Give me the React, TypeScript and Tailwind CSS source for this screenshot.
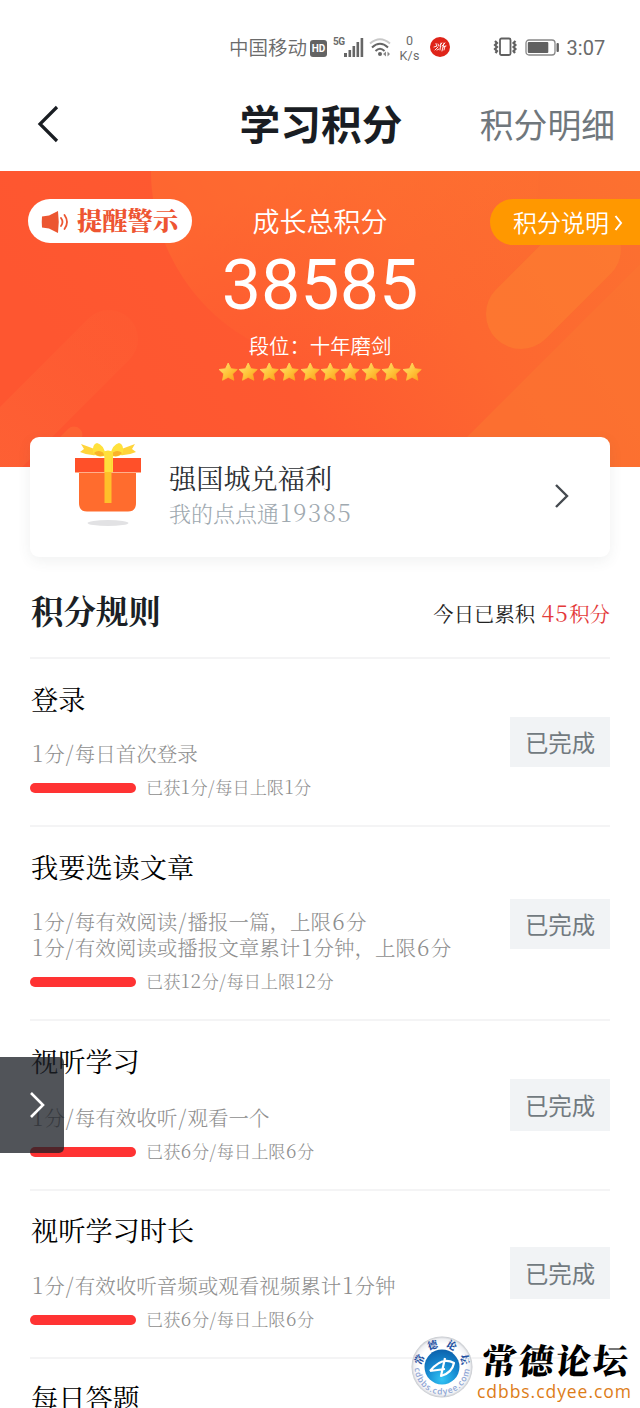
import clsx from "clsx";

const sans = "font-['Roboto','Noto_Sans_CJK_SC',sans-serif]";
const serif = "font-['Noto_Serif_CJK_SC','DejaVu_Serif','Noto_Sans_CJK_SC',serif]";

type Rule = {
  title: string;
  lines: string[];
  progress: string;
  rowClass: string;
  descClass: string;
  buttonClass: string;
};

const rules: Rule[] = [
  {
    title: "登录",
    lines: ["1分/每日首次登录"],
    progress: "已获1分/每日上限1分",
    rowClass: "h-[168px] pt-5",
    descClass: "mt-[21px] mb-3",
    buttonClass: "mt-[38px] h-[50px]",
  },
  {
    title: "我要选读文章",
    lines: ["1分/每有效阅读/播报一篇，上限6分", "1分/有效阅读或播报文章累计1分钟，上限6分"],
    progress: "已获12分/每日上限12分",
    rowClass: "h-[194px] pt-5",
    descClass: "mt-[21px] mb-3",
    buttonClass: "mt-[52px] h-[50px]",
  },
  {
    title: "视听学习",
    lines: ["1分/每有效收听/观看一个"],
    progress: "已获6分/每日上限6分",
    rowClass: "h-[170px] pt-5",
    descClass: "mt-[23px] mb-3",
    buttonClass: "mt-[38px] h-[52px]",
  },
  {
    title: "视听学习时长",
    lines: ["1分/有效收听音频或观看视频累计1分钟"],
    progress: "已获6分/每日上限6分",
    rowClass: "h-[168px] pt-[19px]",
    descClass: "mt-[22px] mb-3",
    buttonClass: "mt-[37px] h-[52px]",
  },
  {
    title: "每日答题",
    lines: [],
    progress: "",
    rowClass: "h-[168px] pt-[19px]",
    descClass: "mt-[22px]",
    buttonClass: "",
  },
];

// Digits and slashes are set a little larger and looser than the CJK text around them
function Mixed({ text, wide = false }: { text: string; wide?: boolean }) {
  return text.split(/([\d/]+)/).map((part, i) =>
    i % 2 === 1 ? (
      <span
        key={i}
        className={clsx("text-[1.1em] leading-none", wide ? "ml-[0.05em] tracking-[0.06em]" : "ml-[0.02em] tracking-[0.04em]")}
      >
        {part}
      </span>
    ) : (
      part
    ),
  );
}

function StatusBar() {
  return (
    <div className={clsx(sans, "flex h-[94px] items-center pl-[229px] text-[#6b6b6b]")}>
      <span className="pt-1 text-[19.5px] leading-none font-[350] whitespace-nowrap">中国移动</span>
      <span className="mt-0.5 ml-[3px] flex h-[17px] w-[17px] items-center justify-center rounded-[3px] bg-[#636363] text-[10px] font-bold text-white">
        HD
      </span>
      <span className="mb-2.5 ml-[6px] text-[10px] leading-none font-bold tracking-[-0.5px]">5G</span>
      <svg width="20" height="19" viewBox="0 0 20 19" className="-ml-px" fill="#666">
        <rect x="0" y="15" width="3" height="4" />
        <rect x="4.5" y="12" width="2.6" height="7" />
        <rect x="8.5" y="8" width="2.6" height="11" />
        <rect x="12.5" y="4" width="2.6" height="15" />
        <rect x="16.6" y="0" width="2.6" height="19" />
      </svg>
      <svg width="22" height="20" viewBox="0 0 22 20" className="ml-[5px]" fill="none" strokeWidth="2">
        <path d="M1 6.500Q11 -2 21 6.500" stroke="#c8c8c8" />
        <path d="M3 10.500Q11 3 19 10.500" stroke="#666" />
        <path d="M6.500 14Q11 9.600 15.500 14" stroke="#666" />
        <circle cx="11" cy="17" r="2" fill="#666" />
        <path d="M17 14.500v5l-3-2.500zM18.500 14.500v5l2.500-2.500z" fill="#888" />
      </svg>
      <div className="ml-[9px] flex w-5 flex-col items-center pt-0.5 text-[12.5px] leading-[15px]">
        <span>0</span>
        <span className="tracking-[0.3px]">K/s</span>
      </div>
      <svg width="20" height="20" viewBox="0 0 20 20" className="ml-[10px]">
        <circle cx="10" cy="10" r="10" fill="#df2419" />
        <path
          d="M4 10l3-1M6 6.5l.5 2M5 13l3-3M8 7l1 2M7 13l2-1M10 8l2-2M11 6l-1 7M12 9l3-3M14 6l-2 8M13 10l3-1M15 9l-1 4"
          stroke="#fff"
          strokeWidth="0.900"
          strokeLinecap="round"
        />
      </svg>
      <svg width="24" height="20" viewBox="0 0 24 20" className="ml-[43px]" fill="none" stroke="#606060" strokeWidth="1.800">
        <rect x="7" y="1.500" width="10.500" height="16.500" rx="1.500" />
        <path d="M2 4l2 2-2 2 2 2-2 2 2 2-1.500 2M22.500 4l-2 2 2 2-2 2 2 2-2 2 1.500 2" strokeWidth="2.200" />
      </svg>
      <svg width="35" height="17" viewBox="0 0 35 17" className="ml-2" fill="none">
        <rect x="1" y="1" width="29" height="15" rx="3" stroke="#888" strokeWidth="1.300" />
        <rect x="2.800" y="3" width="20.500" height="11" rx="1" fill="#606060" />
        <rect x="31.500" y="4" width="2.400" height="9" rx="1" fill="#606060" />
      </svg>
      <span className="ml-[7px] pt-0.5 text-[20px] leading-none">3:07</span>
    </div>
  );
}

function Header() {
  return (
    <header className={clsx(sans, "grid h-[77px] grid-cols-[200px_240px_200px] items-center pb-4")}>
      <svg width="24" height="38" viewBox="0 0 24 38" className="mb-[2px] ml-[35px]" fill="none" stroke="#191d22" strokeWidth="3.200">
        <path d="M22 2 5 19 22 36" />
      </svg>
      <h1 className="pt-1 pl-0.5 text-center text-[40.7px] leading-none font-bold text-[#191d23]">学习积分</h1>
      <span className="mr-[25px] pt-1 text-right text-[33.8px] leading-none whitespace-nowrap text-[#70777c]">
        积分明细
      </span>
    </header>
  );
}

function BannerArt() {
  return (
    <svg className="absolute inset-0" width="640" height="296" viewBox="0 0 640 296">
      <defs>
        <linearGradient id="base" x1="0" y1="0.3" x2="1" y2="0">
          <stop offset="0" stopColor="#fe5630" />
          <stop offset="0.3" stopColor="#fe5930" />
          <stop offset="0.6" stopColor="#fd6730" />
          <stop offset="1" stopColor="#fc7130" />
        </linearGradient>
        <linearGradient id="disc" x1="0.4" y1="0.5" x2="0.6" y2="1">
          <stop offset="0" stopColor="#ff7430" stopOpacity="0.5" />
          <stop offset="1" stopColor="#ff6c30" stopOpacity="0" />
        </linearGradient>
        <linearGradient id="left" gradientUnits="userSpaceOnUse" x1="120" y1="150" x2="0" y2="290">
          <stop offset="0" stopColor="#fd6636" stopOpacity="0.2" />
          <stop offset="1" stopColor="#fd6636" stopOpacity="0.6" />
        </linearGradient>
      </defs>
      <rect width="640" height="296" fill="url(#base)" />
      <circle cx="345" cy="0" r="194" fill="url(#disc)" />
      <path d="M109 168-40 317" stroke="url(#left)" strokeWidth="58" strokeLinecap="round" />
      <path d="M74 264 30 308" stroke="#fd7036" strokeOpacity="0.5" strokeWidth="17" strokeLinecap="round" />
      <path d="M521 143 586 78" stroke="#fc7c31" strokeOpacity="0.7" strokeWidth="70" strokeLinecap="round" />
      <path d="M437 296 640 93V296Z" fill="#fb7331" fillOpacity="0.7" />
    </svg>
  );
}

function Star() {
  return (
    <svg width="20.4" height="20" viewBox="0 0 24 24">
      <path
        d="M12 1.200l3.300 6.900 7.600.9-5.600 5.300 1.500 7.600L12 18.300l-6.800 3.600 1.500-7.600L1.100 9l7.600-.9z"
        fill="url(#gold)"
        strokeLinejoin="round"
        stroke="url(#gold)"
      />
    </svg>
  );
}

function Banner() {
  return (
    <section className={clsx(sans, "relative h-[296px] text-white")}>
      <BannerArt />
      <div className="relative grid grid-cols-[210px_220px_210px] items-start pt-7">
        <div className="ml-7 flex h-11 w-[164px] items-center rounded-full bg-white pl-[13px] text-[#ee5532]">
          <svg width="29" height="24" viewBox="0 0 29 24" className="mt-0.5" fill="none">
            <path d="M1 6.500Q0.500 12 1 17.500L8 18.500 17 23Q18.500 12 17 1L8 5.500Z" fill="#ec5631" />
            <path d="M20 8q3 4 0 8M23.500 5q5 7 0 14" stroke="#ec5631" strokeWidth="1.800" strokeLinecap="round" />
          </svg>
          <span className="mb-0.5 ml-[7px] font-['Noto_Serif_CJK_SC','Noto_Sans_CJK_SC',serif] text-[25.3px] leading-none font-black whitespace-nowrap">
            提醒警示
          </span>
        </div>
        <div className="flex flex-col items-center whitespace-nowrap">
          <span className="mt-1.5 text-[27px] leading-9 font-[350]">成长总积分</span>
          <span className="mt-[7px] text-[70px] leading-[74px]">38585</span>
          <span className="mt-[11px] text-[20.4px] leading-7 font-[350]">段位：十年磨剑</span>
          <svg width="0" height="0" className="absolute">
            <linearGradient id="gold" x1="0" y1="0" x2="1" y2="1">
              <stop offset="0" stopColor="#ffe277" />
              <stop offset="0.5" stopColor="#ffc63c" />
              <stop offset="1" stopColor="#fb9c16" />
            </linearGradient>
          </svg>
          <div className="mt-px flex">
            {Array.from({ length: 10 }, (_, i) => (
              <Star key={i} />
            ))}
          </div>
        </div>
        <div className="flex h-[46px] w-[150px] items-center justify-self-end rounded-l-full bg-[#ff9800] pl-[23px]">
          <span className="pt-[3px] text-[24px] leading-none font-[350] whitespace-nowrap">积分说明</span>
          <svg width="9" height="16" viewBox="0 0 9 16" className="mt-0.5 ml-[5px]" fill="none" stroke="#fff" strokeWidth="2">
            <path d="M1.500 1 7 8l-5.500 7" />
          </svg>
        </div>
      </div>
    </section>
  );
}

function GiftIcon() {
  return (
    <svg width="68" height="86" viewBox="0 0 68 86" className="mt-1 ml-11 shrink-0">
      <ellipse cx="34" cy="82" rx="20.500" ry="3" fill="#e2e2e4" />
      <path d="M5 30H62V62Q62 70.500 54 70.500H13Q5 70.500 5 62Z" fill="#ff6c2e" />
      <rect x="1" y="17" width="66" height="14" fill="#ff5029" />
      <rect x="1" y="31" width="66" height="1" fill="#ffb08c" />
      <path d="M31 12Q18 7 7 3L10 8 6 11Q19 17 31 12M37 12Q50 7 61 3L58 8 62 11Q49 17 37 12" fill="#ffd43a" />
      <path d="M32 14Q29 3 23 2 18 3 19 12 25 18 32 14M36 14Q39 3 45 2 50 3 49 12 43 18 36 14" fill="#ffe13c" />
      <path d="M32 14Q25 7 20 12 24 17 32 14M36 14Q43 7 48 12 44 17 36 14" fill="#f9b22a" />
      <path d="M29 11Q34 8 39 11V31H31V17Z" fill="#ffdf3b" />
      <rect x="30.500" y="17" width="7" height="45" fill="#ffc02a" />
      <rect x="30.500" y="13" width="7" height="18" fill="#ffdf3b" />
    </svg>
  );
}

function RewardCard() {
  return (
    <section
      className={clsx(
        serif,
        "relative mx-[30px] -mt-[30px] flex h-[120px] rounded-[9px] bg-white shadow-[0_4px_14px_rgba(60,80,80,0.08)]",
      )}
    >
      <GiftIcon />
      <div className="ml-[27px] flex flex-1 flex-col whitespace-nowrap">
        <span className="mt-[21px] text-[27.2px] leading-10 text-[#2c3034]">强国城兑福利</span>
        <span className="-mt-px text-[22px] leading-8 font-light text-[#a0a9b0]">
          <Mixed text="我的点点通19385" wide />
        </span>
      </div>
      <svg width="16" height="26" viewBox="0 0 16 26" className="mt-[46px] mr-10" fill="none" stroke="#454a50" strokeWidth="2.400">
        <path d="M2 2l11 11L2 24" />
      </svg>
    </section>
  );
}

function RuleRow({ rule }: { rule: Rule }) {
  return (
    <li className={clsx("flex justify-between border-t-2 border-[#f4f4f5]", rule.rowClass)}>
      <div className="whitespace-nowrap">
        <h3 className="pl-px text-[27.2px] leading-10 text-black">{rule.title}</h3>
        <div className={clsx("pl-px text-[20.5px] leading-[26px] font-light text-[#8e8e8e]", rule.descClass)}>
          {rule.lines.map((line) => (
            <p key={line} className="h-[26px]">
              <Mixed text={line} wide />
            </p>
          ))}
        </div>
        {rule.progress && (
          <div className="flex h-5 items-center">
            <div className="h-[10px] w-[106px] rounded-full bg-[#ff3333]" />
            <span className="mb-0.5 ml-[10px] text-[17.2px] leading-5 font-light text-[#8e8e8e]">
              <Mixed text={rule.progress} />
            </span>
          </div>
        )}
      </div>
      {rule.buttonClass && (
        <span
          className={clsx(
            sans,
            "flex w-[100px] items-center justify-center bg-[#f1f3f5] pt-[5px] text-[23.4px] leading-none text-[#727a80]",
            rule.buttonClass,
          )}
        >
          已完成
        </span>
      )}
    </li>
  );
}

function Watermark() {
  return (
    <div className="absolute top-[1336px] left-[411px] flex items-start">
      <svg width="62" height="62" viewBox="0 0 62 62">
        <defs>
          <radialGradient id="ring">
            <stop offset="0.75" stopColor="#fff" />
            <stop offset="0.92" stopColor="#f0f1f4" />
            <stop offset="1" stopColor="#c4c7cc" />
          </radialGradient>
          <radialGradient id="ball" cx="0.5" cy="0.85" r="0.9">
            <stop offset="0" stopColor="#33c5f5" />
            <stop offset="0.5" stopColor="#1589d0" />
            <stop offset="1" stopColor="#0b5da8" />
          </radialGradient>
          <path id="arcTop" d="M11 31A20 20 0 0 1 51 31" />
          <path id="arcBottom" d="M3.500 31A27.500 27.500 0 0 0 58.500 31" />
        </defs>
        <circle cx="31" cy="31" r="30.500" fill="url(#ring)" />
        <circle cx="31" cy="31" r="17.500" fill="url(#ball)" />
        <path
          d="M19 35Q31 20 43 27 41 37 30 40L34 22M19 35 34 33"
          fill="none"
          stroke="#fff"
          strokeWidth="2.200"
          strokeLinejoin="round"
        />
        <text fill="#1e4fa0" fontSize="10" fontWeight="900" letterSpacing="6.500" fontFamily="Noto Serif CJK SC">
          <textPath href="#arcTop" startOffset="1">
            常德论坛
          </textPath>
        </text>
        <text fill="#8ea5d4" fontSize="8.500" letterSpacing="0.900" fontFamily="Open Sans" fontWeight="600">
          <textPath href="#arcBottom" startOffset="1">
            cdbbs.cdyee.com
          </textPath>
        </text>
      </svg>
      <div className="ml-1 flex flex-col whitespace-nowrap">
        <span className="-skew-x-6 pl-[5px] font-['Noto_Serif_CJK_SC',serif] text-[35px] leading-[46px] font-black tracking-[2px] text-black">
          常德论坛
        </span>
        <span className="font-['Open_Sans',sans-serif] text-[17.5px] leading-[19px] font-medium tracking-[0.95px] text-[#dd7d18]">
          cdbbs.cdyee.com
        </span>
      </div>
    </div>
  );
}

export default function App() {
  return (
    <div className="relative h-[1408px] w-[640px] overflow-hidden bg-white">
      <StatusBar />
      <Header />
      <Banner />
      <RewardCard />
      <main className={clsx(serif, "px-[30px]")}>
        <div className="flex h-[100px] items-center justify-between pt-[10px]">
          <h2 className="pb-[3px] pl-px text-[32.4px] leading-none font-bold text-[#1b1f25]">积分规则</h2>
          <p className="pt-0.5 text-[20.4px] leading-none text-[#222]">
            今日已累积{" "}
            <span className="text-[#e43a3a]">
              <Mixed text="45积分" wide />
            </span>
          </p>
        </div>
        <ul>
          {rules.map((rule) => (
            <RuleRow key={rule.title} rule={rule} />
          ))}
        </ul>
      </main>
      <div className="absolute top-[1057px] left-0 flex h-[96px] w-16 items-center rounded-r-[5px] bg-[#1d2127]/77 pl-[30px]">
        <svg width="16" height="26" viewBox="0 0 16 26" fill="none" stroke="#fff" strokeWidth="2.600">
          <path d="M1 1l12 12L1 25" />
        </svg>
      </div>
      <Watermark />
    </div>
  );
}
